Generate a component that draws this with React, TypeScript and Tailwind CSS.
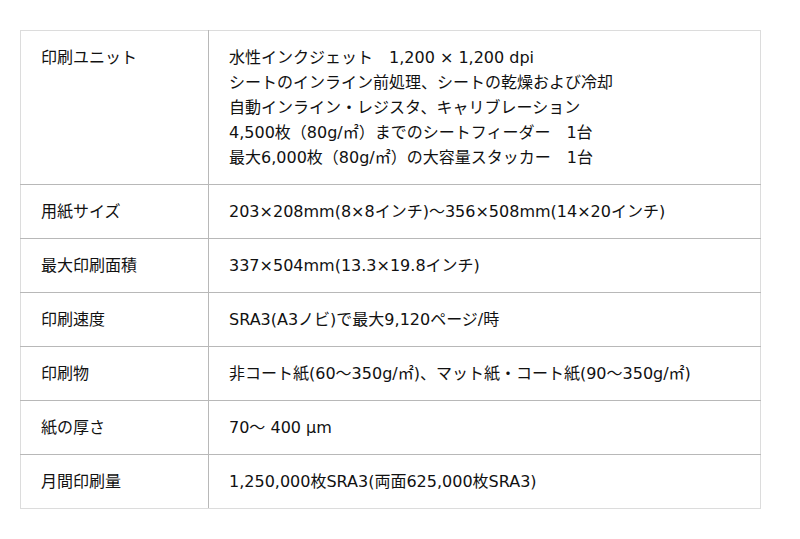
const rows: { label: string; lines: string[] }[] = [
  {
    label: "印刷ユニット",
    lines: [
      "水性インクジェット　1,200 × 1,200 dpi",
      "シートのインライン前処理、シートの乾燥および冷却",
      "自動インライン・レジスタ、キャリブレーション",
      "4,500枚（80g/㎡）までのシートフィーダー　1台",
      "最大6,000枚（80g/㎡）の大容量スタッカー　1台",
    ],
  },
  { label: "用紙サイズ", lines: ["203×208mm(8×8インチ)～356×508mm(14×20インチ)"] },
  { label: "最大印刷面積", lines: ["337×504mm(13.3×19.8インチ)"] },
  { label: "印刷速度", lines: ["SRA3(A3ノビ)で最大9,120ページ/時"] },
  { label: "印刷物", lines: ["非コート紙(60～350g/㎡)、マット紙・コート紙(90～350g/㎡)"] },
  { label: "紙の厚さ", lines: ["70～ 400 µm"] },
  { label: "月間印刷量", lines: ["1,250,000枚SRA3(両面625,000枚SRA3)"] },
];

export default function App() {
  return (
    <div
      className="min-h-[539px] w-[800px] bg-white pl-[20px] pt-[30px] text-[16px] leading-[25px] text-[#111]"
      style={{ fontFamily: '"DejaVu Sans", "Noto Sans CJK JP", sans-serif' }}
    >
      <table className="w-[741px] border-collapse">
        <tbody>
          {rows.map((row, i) => {
            const first = i === 0;
            const last = i === rows.length - 1;
            return (
              <tr key={row.label}>
                <td
                  className={`w-[188px] border-l border-r border-l-[#dcdcdc] border-r-[#b8b8b8] px-[20px] py-[14px] align-top ${
                    first ? "border-t border-t-[#dcdcdc]" : ""
                  } ${last ? "border-b border-b-[#dcdcdc]" : "border-b border-b-[#b8b8b8]"}`}
                >
                  {row.label}
                </td>
                <td
                  className={`border-r border-r-[#dcdcdc] px-[20px] py-[14px] align-top ${
                    first ? "border-t border-t-[#dcdcdc]" : ""
                  } ${last ? "border-b border-b-[#dcdcdc]" : "border-b border-b-[#b8b8b8]"}`}
                >
                  {row.lines.map((line) => (
                    <div key={line} className="whitespace-pre">
                      {line}
                    </div>
                  ))}
                </td>
              </tr>
            );
          })}
        </tbody>
      </table>
    </div>
  );
}
